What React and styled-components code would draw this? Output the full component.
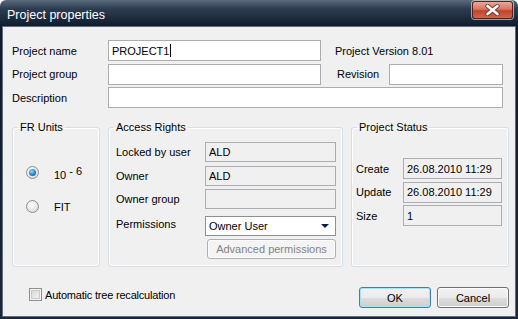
import React from 'react';
import styled, { createGlobalStyle } from 'styled-components';

const GlobalStyle = createGlobalStyle`
  body {
    margin: 0;
    font-family: "Liberation Sans", Arial, sans-serif;
    font-size: 11px;
    color: #000;
  }
`

const Window = styled.div`
  box-sizing: border-box;
  width: 518px;
  height: 319px;
  display: flex;
  flex-direction: column;
  border-radius: 6px 6px 0 0;
  background: linear-gradient(to bottom, #5a6b7e 0px, #2c3c50 9px, #0f1b2c 27px, #1c2838 100%);
`

const TitleBar = styled.div`
  height: 27px;
  display: flex;
  justify-content: space-between;
  align-items: flex-start;
  padding: 0 5px 0 7px;
`

const Title = styled.span`
  color: #fff;
  font-size: 12.5px;
  line-height: 24px;
  margin-top: 3px;
`

const CloseButton = styled.button`
  width: 41px;
  height: 18px;
  margin-top: 1px;
  padding: 0;
  border: 1px solid #5a211a;
  border-radius: 3px;
  display: flex;
  align-items: center;
  justify-content: center;
  background: linear-gradient(to bottom, #eaa898 0%, #d77561 45%, #c2432d 55%, #d2644c 100%);
  box-shadow: 0 0 0 1px rgba(255, 255, 255, 0.55);
`

const Client = styled.div`
  flex: 1;
  margin: 0 3px 3px;
  padding: 13px 6px 0 9px;
  background: #f0f0f0;
  box-shadow: 0 0 0 1px #5f6d7d;
`

const FieldsGrid = styled.div`
  display: grid;
  grid-template-columns: 96px 213px 68px 114px;
  grid-auto-rows: 21px;
  row-gap: 2.5px;
  align-items: center;
`

const Label = styled.span`
  white-space: nowrap;
  padding-left: ${p => p.$indent || 0}px;
  grid-column: ${p => p.$span || 'auto'};
`

const TextBox = styled.div`
  box-sizing: border-box;
  height: ${p => p.$h || 21}px;
  border: 1px solid #abadb3;
  background: ${p => (p.$readOnly ? '#f0f0f0' : '#fff')};
  padding: 0 3px;
  display: flex;
  align-items: center;
  white-space: nowrap;
  grid-column: ${p => p.$span || 'auto'};
`

const Caret = styled.span`
  display: inline-block;
  width: 1px;
  height: 13px;
  margin-left: 1px;
  background: #000;
`

const Groups = styled.div`
  display: grid;
  grid-template-columns: 88px 235px 158px;
  column-gap: 8px;
  height: 146px;
  margin-top: 13px;
`

const GroupBox = styled.fieldset`
  margin: 0;
  padding: 0;
  min-width: 0;
  border: 1px solid #d5dfe5;
  border-radius: 3px;
  box-shadow: inset 0 0 0 1px #fff;
`

const Legend = styled.legend`
  margin-left: 5px;
  padding: 0 2px;
  line-height: 13px;
  font-size: 11px;
`

const RadioList = styled.div`
  display: flex;
  flex-direction: column;
  gap: 21px;
  padding: 32px 0 0 13px;
`

const RadioRow = styled.label`
  display: flex;
  align-items: center;
  gap: 15px;
  height: 13px;
`

const Radio = styled.span`
  box-sizing: border-box;
  width: 13px;
  height: 13px;
  border-radius: 50%;
  border: 1px solid #8e8f8f;
  background: radial-gradient(circle at 40% 35%, #ffffff 0%, #e9e9e9 50%, #cfcfcf 100%);
  display: flex;
  align-items: center;
  justify-content: center;

  &::after {
    content: '';
    width: 7px;
    height: 7px;
    border-radius: 50%;
    display: ${p => (p.$checked ? 'block' : 'none')};
    background: radial-gradient(circle at 40% 35%, #a8dcff 0%, #2b8fd6 45%, #0b4a8a 100%);
  }
`

const Sup = styled.sup`
  font-size: 11px;
  vertical-align: 4px;
  margin-left: 3px;
`

const AccessGrid = styled.div`
  display: grid;
  grid-template-columns: 89px 131px;
  grid-template-rows: 20px 20px 20px 23px 20px;
  row-gap: 3.5px;
  align-items: center;
  padding: 8px 0 0 7px;
`

const Select = styled.div`
  box-sizing: border-box;
  align-self: end;
  height: 20px;
  border: 1px solid #8c8f94;
  background: #fff;
  padding: 0 6px 0 3px;
  display: flex;
  align-items: center;
  justify-content: space-between;
`

const Arrow = styled.span`
  width: 0;
  height: 0;
  border-left: 4px solid transparent;
  border-right: 4px solid transparent;
  border-top: 4px solid #0c1a4a;
`

const Button = styled.button`
  box-sizing: border-box;
  width: ${p => p.$w || 72}px;
  height: ${p => p.$h || 21}px;
  padding: 0;
  font-family: inherit;
  font-size: 11px;
  color: ${p => (p.disabled ? '#838383' : '#000')};
  border: 1px solid ${p => (p.disabled ? '#adb2b5' : p.$default ? '#3c7fb1' : '#707070')};
  border-radius: 3px;
  background: ${p =>
    p.disabled
      ? '#f4f4f4'
      : 'linear-gradient(to bottom, #f2f2f2 0%, #ebebeb 50%, #dddddd 51%, #cfcfcf 100%)'};
  box-shadow: ${p => (p.$default ? 'inset 0 0 0 1px #a6e3f7' : 'inset 0 0 0 1px #fcfcfc')};
  grid-column: ${p => p.$span || 'auto'};
  justify-self: end;
`

const StatusGrid = styled.div`
  display: grid;
  grid-template-columns: 47px 99px;
  grid-auto-rows: 21px;
  row-gap: 2.5px;
  align-items: center;
  padding: 24px 0 0 4px;
`

const Footer = styled.div`
  display: flex;
  align-items: flex-start;
  margin-top: 20px;
`

const CheckRow = styled.label`
  display: flex;
  align-items: center;
  gap: 3px;
  margin: 1px 0 0 17px;
  height: 13px;
  letter-spacing: -0.2px;
`

const CheckBox = styled.span`
  box-sizing: border-box;
  width: 13px;
  height: 13px;
  border: 1px solid #8e8f8f;
  background: linear-gradient(135deg, #d6d6d6 0%, #f4f4f4 100%);
  box-shadow: inset 0 0 0 1px #f5f5f5, inset 0 0 0 2px #c9c9c9;
`

const ButtonRow = styled.div`
  display: flex;
  gap: 6px;
  margin-left: auto;
`

const CloseGlyph = () => (
  <svg width="15" height="12" viewBox="0 0 15 12">
    <path d="M2.5 2 L12.5 10 M12.5 2 L2.5 10" stroke="#6b3a34" strokeWidth="4.4" strokeLinecap="round" />
    <path d="M2.5 2 L12.5 10 M12.5 2 L2.5 10" stroke="#ffffff" strokeWidth="2.6" strokeLinecap="round" />
  </svg>
)

const App = () => {
  return (
    <>
      <GlobalStyle />
      <Window>
        <TitleBar>
          <Title>Project properties</Title>
          <CloseButton aria-label="Close">
            <CloseGlyph />
          </CloseButton>
        </TitleBar>
        <Client>
          <FieldsGrid>
            <Label>Project name</Label>
            <TextBox>PROJECT1<Caret /></TextBox>
            <Label $span="3 / 5" $indent={14}>Project Version 8.01</Label>

            <Label>Project group</Label>
            <TextBox />
            <Label $indent={16}>Revision</Label>
            <TextBox />

            <Label>Description</Label>
            <TextBox $span="2 / 5" />
          </FieldsGrid>

          <Groups>
            <GroupBox>
              <Legend>FR Units</Legend>
              <RadioList>
                <RadioRow>
                  <Radio $checked />
                  <span>10<Sup>- 6</Sup></span>
                </RadioRow>
                <RadioRow>
                  <Radio />
                  <span>FIT</span>
                </RadioRow>
              </RadioList>
            </GroupBox>

            <GroupBox>
              <Legend>Access Rights</Legend>
              <AccessGrid>
                <Label>Locked by user</Label>
                <TextBox $readOnly $h={20}>ALD</TextBox>
                <Label>Owner</Label>
                <TextBox $readOnly $h={20}>ALD</TextBox>
                <Label>Owner group</Label>
                <TextBox $readOnly $h={20} />
                <Label>Permissions</Label>
                <Select>
                  <span>Owner User</span>
                  <Arrow />
                </Select>
                <Button disabled $span="2" $w={129} $h={20}>Advanced permissions</Button>
              </AccessGrid>
            </GroupBox>

            <GroupBox>
              <Legend>Project Status</Legend>
              <StatusGrid>
                <Label>Create</Label>
                <TextBox $readOnly>26.08.2010 11:29</TextBox>
                <Label>Update</Label>
                <TextBox $readOnly>26.08.2010 11:29</TextBox>
                <Label>Size</Label>
                <TextBox $readOnly>1</TextBox>
              </StatusGrid>
            </GroupBox>
          </Groups>

          <Footer>
            <CheckRow>
              <CheckBox />
              <span>Automatic tree recalculation</span>
            </CheckRow>
            <ButtonRow>
              <Button $default>OK</Button>
              <Button>Cancel</Button>
            </ButtonRow>
          </Footer>
        </Client>
      </Window>
    </>
  );
};

export default App;
